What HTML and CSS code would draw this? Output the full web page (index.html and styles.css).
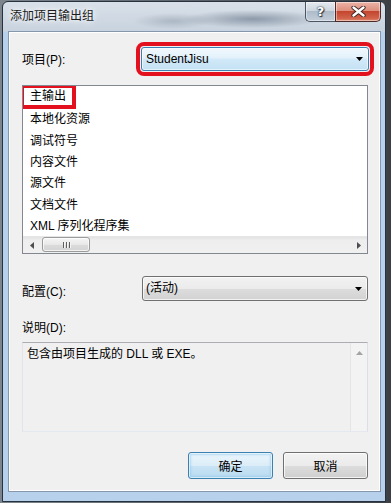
FILE: index.html
```html
<!DOCTYPE html>
<html lang="zh-CN">
<head>
<meta charset="utf-8">
<title>添加项目输出组</title>
<link rel="stylesheet" href="styles.css">
</head>
<body>
<div class="window">
  <div class="titlebar">
    <span class="title">添加项目输出组</span>
    <div class="caps">
      <div class="cap help">?</div>
      <div class="cap close">
        <svg width="15" height="11" viewBox="0 0 15 11"><path d="M2.5 1.5L12.5 9.5M12.5 1.5L2.5 9.5" stroke="#3a2320" stroke-width="4.2" stroke-linecap="round" fill="none"/><path d="M2.5 1.5L12.5 9.5M12.5 1.5L2.5 9.5" stroke="#ffffff" stroke-width="2.4" stroke-linecap="round" fill="none"/></svg>
      </div>
    </div>
  </div>
  <div class="client">
    <div class="row row-project">
      <span class="label">项目(P):</span>
      <div class="combo combo-blue marked">
        <span class="combo-text">StudentJisu</span>
        <svg class="arrow" width="7" height="4" viewBox="0 0 7 4"><path d="M0 0H7L3.5 4Z" fill="#000"/></svg>
      </div>
    </div>
    <div class="list">
      <ul class="items">
        <li><span class="hl">主输出</span></li>
        <li>本地化资源</li>
        <li>调试符号</li>
        <li>内容文件</li>
        <li>源文件</li>
        <li>文档文件</li>
        <li>XML 序列化程序集</li>
      </ul>
      <div class="hscroll">
        <div class="sb-btn"><svg width="4" height="7" viewBox="0 0 4 7"><path d="M4 0V7L0 3.5Z" fill="#4d4d4d"/></svg></div>
        <div class="thumb"><span class="grip"></span><span class="grip"></span><span class="grip"></span></div>
        <div class="track"></div>
        <div class="sb-btn"><svg width="4" height="7" viewBox="0 0 4 7"><path d="M0 0V7L4 3.5Z" fill="#4d4d4d"/></svg></div>
      </div>
    </div>
    <div class="row row-config">
      <span class="label">配置(C):</span>
      <div class="combo combo-gray">
        <span class="combo-text">(活动)</span>
        <svg class="arrow" width="7" height="4" viewBox="0 0 7 4"><path d="M0 0H7L3.5 4Z" fill="#000"/></svg>
      </div>
    </div>
    <div class="desc-label">说明(D):</div>
    <div class="desc">
      <div class="desc-text">包含由项目生成的 DLL 或 EXE。</div>
      <div class="vscroll">
        <div class="vs-btn"><svg width="7" height="4" viewBox="0 0 7 4"><path d="M0 4H7L3.5 0Z" fill="#a3a3a3"/></svg></div>
      </div>
    </div>
    <div class="buttons">
      <button class="btn btn-default">确定</button>
      <button class="btn">取消</button>
    </div>
  </div>
</div>
</body>
</html>
```
FILE: styles.css
```css
* { box-sizing: border-box; }

html, body {
  margin: 0;
  padding: 0;
  width: 391px;
  height: 503px;
  overflow: hidden;
}

body {
  background: linear-gradient(to right, #7d848c 0, #7d848c 2px, #3e4247 386px, #3a3e44 100%);
  font-family: "Liberation Sans", "Noto Sans CJK SC", sans-serif;
  font-size: 12px;
  color: #000;
}

.window {
  margin: 1px 0 0 2px;
  width: 384px;
  height: 501px;
  border: 1px solid #26323f;
  border-radius: 6px 6px 0 0;
  padding: 0 4px 9px 5px;
  display: flex;
  flex-direction: column;
  background:
    radial-gradient(ellipse 70px 9px at 250px 17px, rgba(88, 102, 122, 0.55), rgba(88, 102, 122, 0) 100%),
    radial-gradient(ellipse 40px 8px at 170px 19px, rgba(110, 124, 142, 0.35), rgba(110, 124, 142, 0) 100%),
    linear-gradient(to bottom, #d9e0e8 0, #c8d3df 29px, #b7d0ec 31px, #b7d0ec 100%);
}

.titlebar {
  height: 29px;
  display: flex;
  align-items: flex-start;
  flex: none;
}

.title {
  margin: 6px 0 0 2px;
  line-height: 17px;
  font-size: 12px;
  color: #1b1b1b;
  text-shadow: 0 0 5px #ffffff, 0 0 8px rgba(255, 255, 255, 0.9);
}

.caps {
  margin-left: auto;
  display: flex;
}

.cap {
  height: 20px;
  display: flex;
  align-items: center;
  justify-content: center;
  border: 1px solid #4a5566;
  border-top: none;
  box-shadow: inset 0 0 0 1px rgba(255, 255, 255, 0.45);
}

.help {
  width: 30px;
  border-radius: 0 0 0 5px;
  border-right: none;
  background: linear-gradient(to bottom, #e6eaef 0, #cdd5de 45%, #aebbc9 50%, #c3ced9 100%);
  color: #fff;
  font-family: "DejaVu Sans", sans-serif;
  font-weight: bold;
  font-size: 13px;
  line-height: 13px;
  text-shadow: 0 0 1px #2d3643, 0 0 2px #2d3643, 1px 1px 1px #2d3643;
}

.close {
  width: 46px;
  border-radius: 0 0 5px 0;
  border-color: #4d2a2a;
  background: linear-gradient(to bottom, #ecb4a7 0, #de8f7d 45%, #c5462f 50%, #d0624a 85%, #e08b6e 100%);
}

.close svg { display: block; }

.client {
  height: 461px;
  flex: none;
  border: 1px solid #8597ad;
  box-shadow: inset 0 0 0 1px #ffffff;
  background: #f0f0f0;
  padding: 15px 12px 0 13px;
  display: flex;
  flex-direction: column;
}

.row {
  display: flex;
  align-items: center;
}

.label {
  flex: none;
  line-height: 17px;
}

.row-project {
  height: 24px;
}

.row-project .label {
  width: 119px;
  padding-top: 3px;
}

.combo {
  position: relative;
  display: flex;
  align-items: center;
  border-radius: 3px;
  flex: none;
}

.combo-text {
  line-height: 17px;
}

.combo .arrow {
  margin-left: auto;
  margin-right: 5px;
  display: block;
}

.combo-blue {
  width: 228px;
  height: 24px;
  margin-right: -1px;
  padding-left: 4px;
  border: 1px solid #3c7fb1;
  background: linear-gradient(to bottom, #f1f8fd 0, #e3f1fb 45%, #d2e9f8 50%, #c3e1f4 100%);
  box-shadow: inset 0 0 0 1px rgba(255, 255, 255, 0.6);
}

.marked {
  outline: 4px solid #e3101d;
  outline-offset: 1px;
}

.list {
  margin-top: 14px;
  height: 169px;
  border: 1px solid #828790;
  background: #fff;
  display: flex;
  flex-direction: column;
  flex: none;
}

.items {
  list-style: none;
  margin: 0;
  padding: 0 0 0 7px;
  height: 150px;
  overflow: hidden;
  flex: none;
}

.items li {
  height: 21.33px;
  display: flex;
  align-items: center;
  white-space: nowrap;
}

.hl {
  display: inline-block;
  line-height: 17px;
  height: 17px;
  padding: 0 6px;
  margin-left: -6px;
  outline: 4px solid #e3101d;
}

.hscroll {
  height: 17px;
  flex: none;
  display: flex;
  align-items: stretch;
  background: linear-gradient(to bottom, #e2e2e2 0, #eeeeee 20%, #f0f0f0 100%);
  border-top: 1px solid #e6e6e6;
}

.sb-btn {
  width: 17px;
  flex: none;
  display: flex;
  align-items: center;
  justify-content: center;
}

.sb-btn svg { display: block; }

.thumb {
  width: 48px;
  margin: 0 0 1px 2px;
  flex: none;
  border: 1px solid #9b9b9b;
  border-radius: 3px;
  background: linear-gradient(to bottom, #f6f6f6 0, #e8e8e8 50%, #dbdbdb 51%, #d4d4d4 100%);
  box-shadow: inset 0 0 0 1px rgba(255, 255, 255, 0.7);
  display: flex;
  align-items: center;
  justify-content: center;
  gap: 2px;
}

.grip {
  width: 1px;
  height: 6px;
  background: #5f5f5f;
  box-shadow: 1px 0 0 #f4f4f4;
}

.track { flex: 1; }

.row-config {
  margin-top: 22px;
  height: 25px;
}

.row-config .label {
  width: 120px;
  padding-top: 7px;
}

.combo-gray {
  width: 226px;
  height: 25px;
  padding-left: 3px;
  border: 1px solid #707070;
  background: linear-gradient(to bottom, #f2f2f2 0, #ebebeb 50%, #dddddd 51%, #d2d2d2 100%);
  box-shadow: inset 0 0 0 1px rgba(255, 255, 255, 0.7);
}

.desc-label {
  margin-top: 19px;
  line-height: 17px;
}

.desc {
  margin-top: 5px;
  height: 90px;
  flex: none;
  display: flex;
  border: 1px solid #abadb3;
  border-right-color: #dbdfe6;
  border-bottom-color: #e3e9ef;
  border-left-color: #e2e3ea;
  background: #f0f0f0;
}

.desc-text {
  flex: 1;
  padding: 3px 0 0 4px;
  line-height: 17px;
}

.vscroll {
  width: 17px;
  flex: none;
  background: #f3f3f3;
  border-left: 1px solid #e4e4e4;
}

.vs-btn {
  height: 17px;
  display: flex;
  align-items: center;
  justify-content: center;
  padding-top: 2px;
}

.vs-btn svg { display: block; }

.buttons {
  margin-top: 20px;
  display: flex;
  justify-content: flex-end;
  gap: 10px;
}

.btn {
  width: 85px;
  height: 27px;
  margin: 0;
  padding: 0;
  font-family: "Liberation Sans", "Noto Sans CJK SC", sans-serif;
  font-size: 12px;
  color: #000;
  border: 1px solid #707070;
  border-radius: 3px;
  background: linear-gradient(to bottom, #f2f2f2 0, #ebebeb 50%, #dddddd 51%, #cfcfcf 100%);
  box-shadow: inset 0 0 0 1px rgba(255, 255, 255, 0.75);
}

.btn-default {
  border-color: #3c7fb1;
  background: linear-gradient(to bottom, #eaf5fc 0, #dcedf8 50%, #c8e3f4 51%, #bcdcf1 100%);
  box-shadow: inset 0 0 0 1px rgba(255, 255, 255, 0.6), inset 0 0 2px 2px rgba(120, 190, 235, 0.45);
}
```
